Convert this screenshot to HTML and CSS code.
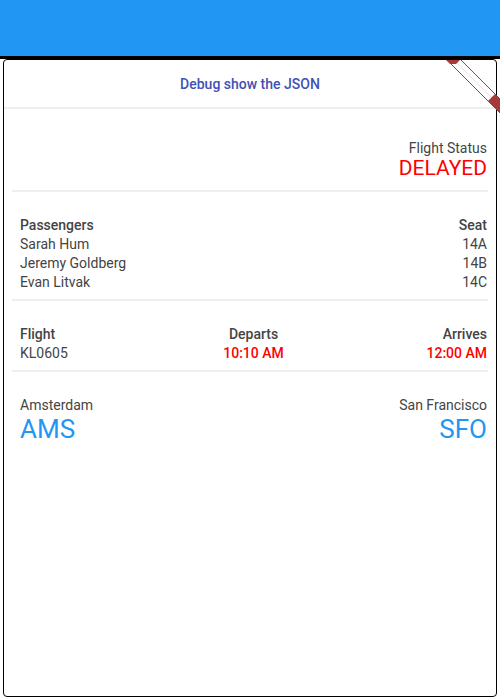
FILE: index.html
```html
<!DOCTYPE html>
<html>
<head>
<meta charset="utf-8">
<link rel="stylesheet" href="styles.css">
</head>
<body>
<div class="appbar"></div>
<div class="appbar-edge"></div>
<main class="panel">
  <div class="debug-row"><span class="debug-btn">Debug show the JSON</span></div>
  <div class="rule"></div>
  <div class="content">
    <section class="status">
      <div class="text">Flight Status</div>
      <div class="status-value">DELAYED</div>
    </section>
    <div class="rule"></div>
    <section class="section two-col">
      <div class="col">
        <div class="head">Passengers</div>
        <div class="text">Sarah Hum</div>
        <div class="text">Jeremy Goldberg</div>
        <div class="text">Evan Litvak</div>
      </div>
      <div class="col right">
        <div class="head">Seat</div>
        <div class="text">14A</div>
        <div class="text">14B</div>
        <div class="text">14C</div>
      </div>
    </section>
    <div class="rule"></div>
    <section class="section three-col">
      <div class="col">
        <div class="head">Flight</div>
        <div class="text">KL0605</div>
      </div>
      <div class="col center">
        <div class="head">Departs</div>
        <div class="time">10:10 AM</div>
      </div>
      <div class="col right">
        <div class="head">Arrives</div>
        <div class="time">12:00 AM</div>
      </div>
    </section>
    <div class="rule"></div>
    <section class="section two-col">
      <div class="col">
        <div class="text">Amsterdam</div>
        <div class="code">AMS</div>
      </div>
      <div class="col right">
        <div class="text">San Francisco</div>
        <div class="code">SFO</div>
      </div>
    </section>
  </div>
</main>
<svg class="banner" width="60" height="60" viewBox="440 56 60 60" xmlns="http://www.w3.org/2000/svg">
  <polygon points="447,60 461,60 500,99 500,113" fill="#ffffff"/>
  <line x1="454" y1="60" x2="500" y2="106" stroke="#f3dede" stroke-width="1"/>
  <line x1="447" y1="60" x2="500" y2="113" stroke="#a63a3a" stroke-width="1"/>
  <line x1="461" y1="60" x2="500" y2="99" stroke="#a63a3a" stroke-width="1"/>
  <polygon points="446,60 460,60 456,64 450,64" fill="#a63a3a"/>
  <polygon points="488,101 495,94 500,99 500,113" fill="#a63a3a"/>
</svg>
</body>
</html>
```
FILE: styles.css
```css
html, body {
  margin: 0;
  padding: 0;
  background: #ffffff;
}
body {
  position: relative;
  width: 500px;
  height: 700px;
  overflow: hidden;
  font-family: Roboto, "Liberation Sans", sans-serif;
  font-size: 14px;
  color: #444444;
}
.appbar {
  height: 56px;
  background: #2196f3;
}
.appbar-edge {
  height: 3px;
  background: #000000;
}
.panel {
  box-sizing: border-box;
  height: 638px;
  margin: 0 3px;
  border: 1px solid #000000;
  border-radius: 4px;
  background: #ffffff;
}
.debug-row {
  height: 47px;
  display: flex;
  align-items: center;
  justify-content: center;
}
.debug-btn {
  font-weight: 500;
  font-size: 14px;
  color: #3f51b5;
}
.rule {
  height: 2px;
  background: #eeeeee;
}
.content {
  padding: 0 8px;
}
.status {
  padding: 30px 1px 11px 8px;
  text-align: right;
}
.text, .head, .time {
  line-height: 19px;
}
.head {
  font-weight: 500;
}
.status-value {
  font-size: 21px;
  line-height: 21px;
  color: #ff0000;
}
.section {
  padding: 24px 1px 7px 8px;
  display: grid;
}
.two-col {
  grid-template-columns: 1fr 1fr;
}
.three-col {
  grid-template-columns: 1fr 1fr 1fr;
}
.right {
  text-align: right;
}
.center {
  text-align: center;
}
.time {
  font-weight: 500;
  color: #ff0000;
}
.code {
  font-size: 26px;
  line-height: 28px;
  color: #2196f3;
}
.banner {
  position: absolute;
  left: 440px;
  top: 56px;
}
```
